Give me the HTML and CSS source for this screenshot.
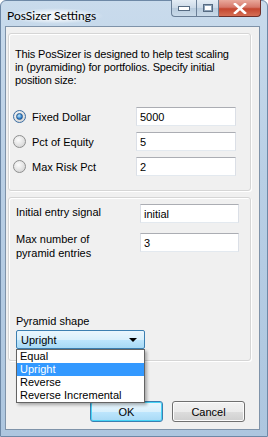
FILE: index.html
```html
<!DOCTYPE html>
<html>
<head>
<meta charset="utf-8">
<link rel="stylesheet" href="styles.css">
</head>
<body>
<div class="window">
  <div class="titlebar">
    <span class="title">PosSizer Settings</span>
    <div class="caption">
      <div class="cbtn min"><span class="dash"></span></div>
      <div class="cbtn max"><span class="box"></span></div>
      <div class="cbtn close">
        <svg width="14" height="11" viewBox="0 0 14 11"><path d="M2 1 L12 10 M12 1 L2 10" stroke="#fff" stroke-width="2.6" stroke-linecap="square" fill="none"/></svg>
      </div>
    </div>
  </div>
  <div class="client">
    <div class="panel p1">
      <p class="intro">This PosSizer is designed to help test scaling in (pyramiding) for portfolios. Specify initial position size:</p>
      <div class="rows">
        <div class="row"><span class="radio on"><span class="dot"></span></span><span class="rlabel">Fixed Dollar</span><span class="tb">5000</span></div>
        <div class="row"><span class="radio"></span><span class="rlabel">Pct of Equity</span><span class="tb">5</span></div>
        <div class="row"><span class="radio"></span><span class="rlabel">Max Risk Pct</span><span class="tb">2</span></div>
      </div>
    </div>
    <div class="panel p2">
      <div class="row2"><span class="flabel">Initial entry signal</span><span class="tb tb2">initial</span></div>
      <div class="row2 r2b"><span class="flabel">Max number of<br>pyramid entries</span><span class="tb tb2">3</span></div>
      <div class="shape">
        <div class="flabel">Pyramid shape</div>
        <div class="combo"><span>Upright</span><span class="arrow"></span></div>
        <ul class="droplist">
          <li>Equal</li>
          <li class="sel">Upright</li>
          <li>Reverse</li>
          <li>Reverse Incremental</li>
        </ul>
      </div>
    </div>
    <div class="buttons">
      <div class="btn ok">OK</div>
      <div class="btn">Cancel</div>
    </div>
  </div>
</div>
</body>
</html>
```
FILE: styles.css
```css
html, body { margin: 0; padding: 0; }
body { width: 268px; height: 437px; overflow: hidden; background: #fff; }
.window {
  width: 268px; height: 437px; box-sizing: border-box;
  background: linear-gradient(to bottom, #c9dbec 0%, #b9cfe5 40%, #adc6df 100%);
  border: 1px solid #6d88a6;
  border-radius: 6px 6px 0 0;
  display: flex; flex-direction: column;
  padding: 0 7px 6px 4px;
  font-family: "Liberation Sans", Arial, sans-serif;
  font-size: 11px; color: #000;
}
.titlebar {
  height: 25px; display: flex; justify-content: space-between; align-items: flex-start;
  position: relative;
}
.title {
  font-family: Lato, "Noto Sans", sans-serif; font-size: 12px; color: #000;
  margin: 7px 0 0 2px; line-height: 16px;
  background: radial-gradient(ellipse at center, rgba(255,255,255,0.75) 30%, rgba(255,255,255,0) 70%);
  padding: 0 8px 0 0;
}
.caption { display: flex; margin-top: -1px; margin-right: -1px; }
.cbtn {
  height: 17px; box-sizing: border-box;
  border: 1px solid #6a7f97; border-top: none;
  display: flex; align-items: center; justify-content: center;
}
.min { width: 25px; border-radius: 0 0 0 4px; background: linear-gradient(#e4edf5, #cbd9e7 50%, #b8cbdd 51%, #c9dae9); border-right: none; }
.max { width: 23px; background: linear-gradient(#e4edf5, #cbd9e7 50%, #b8cbdd 51%, #c9dae9); }
.close { width: 42px; border-radius: 0 0 4px 0; border-left: none; border-color: #6e2f2a;
  background: linear-gradient(#e9a99c, #d6786a 45%, #c4462f 55%, #d56f55); }
.dash { width: 10px; height: 3px; background: #fff; border: 1px solid #566b82; }
.box { width: 8px; height: 6px; border: 1px solid #566b82; background: #fff; box-shadow: inset 0 0 0 1px #8ea3b9; }
.client {
  flex: 1; background: #f0f0f0; border: 1px solid #7f93a9;
  display: flex; flex-direction: column;
  padding: 6px 8px 0 2px; position: relative;
}
.panel {
  border: 1px solid #d5d5d5; border-radius: 3px;
  box-shadow: inset 1px 1px 0 #fff, 1px 1px 0 #fff;
}
.p1 { height: 158px; box-sizing: border-box; padding: 14px 0 0 4px; }
.intro { margin: 0 0 0 2px; line-height: 13px; width: 218px; letter-spacing: -0.15px; }
.rows { margin-top: 20px; display: flex; flex-direction: column; gap: 6px; }
.row { display: flex; align-items: center; height: 19px; }
.radio {
  width: 11px; height: 11px; border-radius: 50%; border: 1px solid #8e8f8f;
  background: radial-gradient(circle at 40% 35%, #fcfcfc, #d6d6d6 80%);
  display: flex; align-items: center; justify-content: center;
}
.radio.on { border-color: #3b6ea3; }
.dot { width: 5px; height: 5px; border-radius: 50%; background: radial-gradient(circle at 40% 35%, #bfeaff, #1f73c5 70%, #0b4a8c); border: 1px solid #2a5a8c; }
.rlabel { width: 104px; margin-left: 6px; }
.tb {
  width: 100px; height: 19px; box-sizing: border-box; background: #fff;
  border: 1px solid #dbdfe6; border-top-color: #abadb3; border-bottom-color: #e3e9ef;
  padding: 2px 3px 0; line-height: 14px;
}
.p2 { margin-top: 6px; height: 164px; box-sizing: border-box; padding: 6px 0 0 7px; display: flex; flex-direction: column; }
.row2 { display: flex; align-items: flex-start; }
.flabel { width: 124px; line-height: 14px; }
.row2:first-child .flabel { padding-top: 1px; }
.tb2 { width: 99px; }
.r2b { margin-top: 10px; }
.r2b .flabel { margin-top: -1px; }
.shape { margin-top: auto; padding-bottom: 11px; position: relative; }
.combo {
  margin-top: 2px; width: 129px; height: 19px; box-sizing: border-box;
  border: 1px solid #3c7fb1; border-radius: 2px;
  background: linear-gradient(#eaf6fd, #d9f0fc 50%, #bee6fd 51%, #a7d9f5);
  display: flex; align-items: center; justify-content: space-between;
  padding: 0 7px 0 4px;
}
.arrow { width: 0; height: 0; border-left: 4px solid transparent; border-right: 4px solid transparent; border-top: 4px solid #000; }
.droplist {
  position: absolute; left: 0; top: 35px; z-index: 5;
  width: 129px; box-sizing: border-box; margin: 0; padding: 0; list-style: none;
  background: #fff; border: 1px solid #646464;
  box-shadow: 2px 2px 3px rgba(0,0,0,0.3);
}
.droplist li { height: 13px; line-height: 13px; padding-left: 3px; }
.droplist li.sel { background: #3399ff; color: #fff; }
.buttons { margin-top: auto; display: flex; justify-content: flex-end; gap: 9px; padding: 0 6px 7px 0; }
.btn {
  width: 73px; height: 21px; box-sizing: border-box;
  border: 1px solid #707070; border-radius: 3px;
  background: linear-gradient(#f2f2f2, #ebebeb 50%, #dddddd 51%, #cfcfcf);
  box-shadow: inset 0 0 0 1px #fcfcfc;
  display: flex; align-items: center; justify-content: center;
}
.btn.ok { border-color: #3c7fb1; box-shadow: inset 0 0 0 1px #48d4f6; background: linear-gradient(#eaf6fd, #d9f0fc 50%, #bee6fd 51%, #a7d9f5); }
```
